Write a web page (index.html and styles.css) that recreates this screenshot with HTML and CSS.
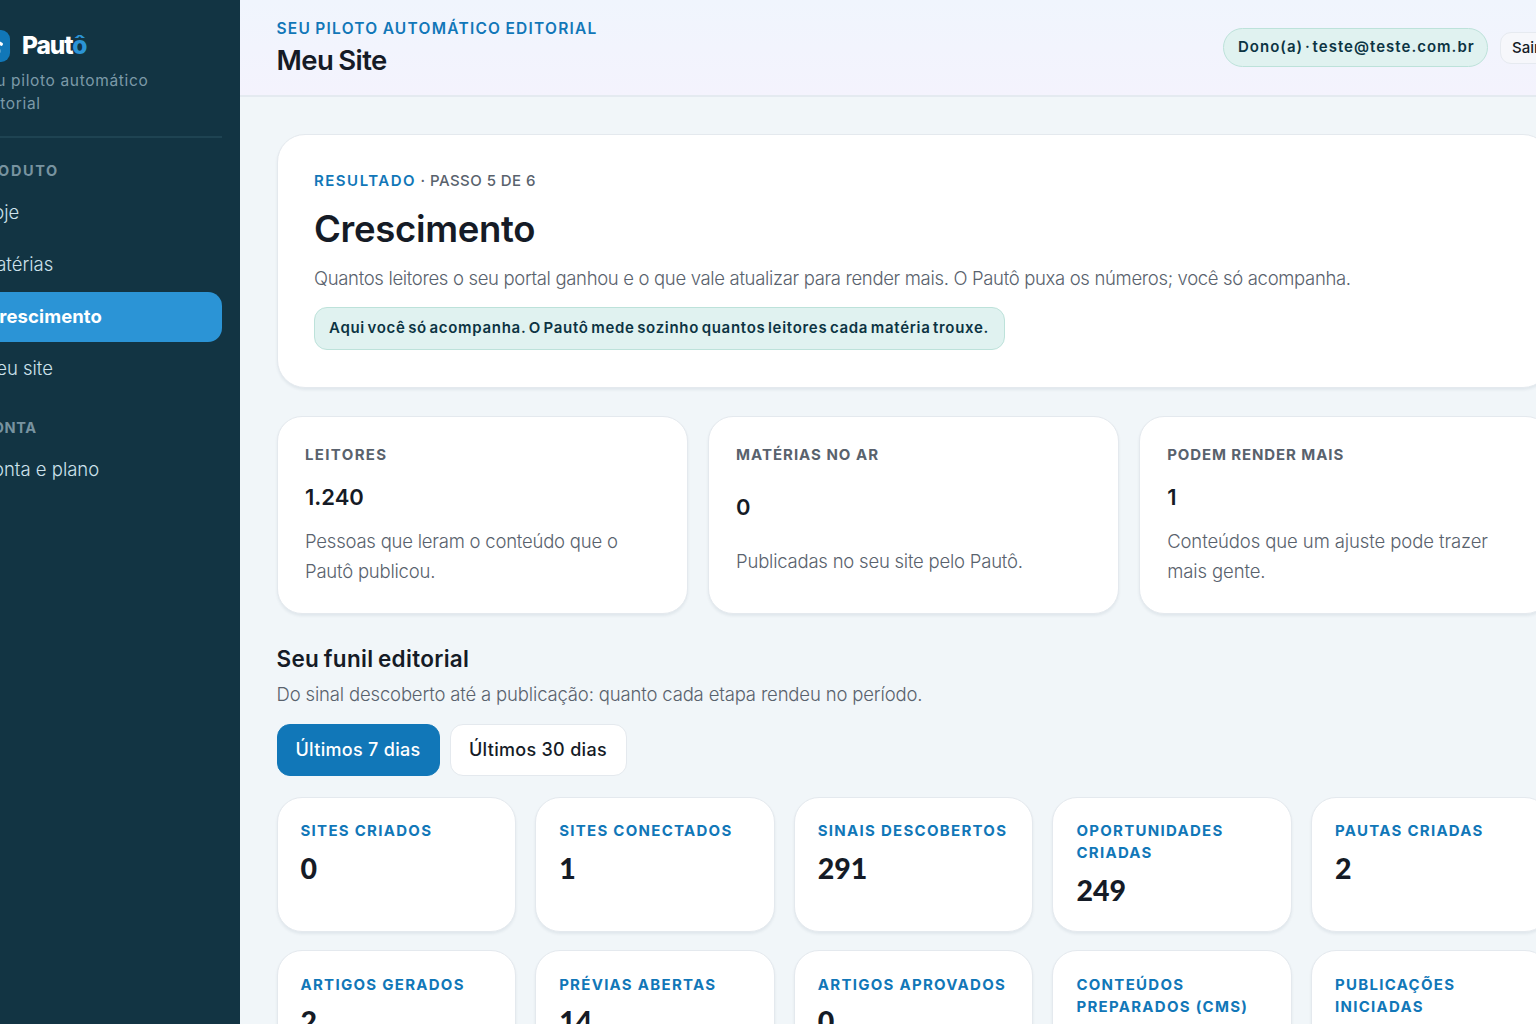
FILE: index.html
```html
<!DOCTYPE html>
<html lang="pt-BR">
<head>
<meta charset="utf-8">
<title>Pautô · Crescimento</title>
<link rel="stylesheet" href="styles.css">
</head>
<body>
<div class="app">
  <aside class="sidebar">
    <div class="brand">
      <div class="brand-row">
        <svg class="brand-mark" viewBox="0 0 34 34" aria-hidden="true"><rect y="1" width="34" height="32" rx="9" fill="#1177b8"/><path d="M9 16 L17 10 L25.3 15.2" fill="none" stroke="#fff" stroke-width="3.2" stroke-linecap="round" stroke-linejoin="round"/><circle cx="16.5" cy="22" r="6.3" fill="none" stroke="#fff" stroke-width="3"/></svg>
        <span class="brand-name">Paut<span class="brand-accent">ô</span></span>
      </div>
      <p class="brand-tag">Seu piloto automático<br>editorial</p>
    </div>
    <h2 class="nav-title">Produto</h2>
    <nav class="nav">
      <a class="nav-item">Hoje</a>
      <a class="nav-item">Matérias</a>
      <a class="nav-item active">Crescimento</a>
      <a class="nav-item">Meu site</a>
    </nav>
    <h2 class="nav-title nav-title-account">Conta</h2>
    <nav class="nav"><a class="nav-item">Conta e plano</a></nav>
  </aside>
  <div class="main">
    <header class="topbar">
      <div>
        <p class="topbar-eyebrow">Seu piloto automático editorial</p>
        <h1 class="topbar-title">Meu Site</h1>
      </div>
      <div class="account">
        <span class="account-pill">Dono(a) · teste@teste.com.br</span>
        <button class="logout">Sair</button>
      </div>
    </header>
    <main class="content">
      <section class="hero">
        <p class="hero-step"><strong>Resultado</strong> · Passo 5 de 6</p>
        <h2 class="hero-title">Crescimento</h2>
        <p class="hero-text">Quantos leitores o seu portal ganhou e o que vale atualizar para render mais. O Pautô puxa os números; você só acompanha.</p>
        <p class="notice">Aqui você só acompanha. O Pautô mede sozinho quantos leitores cada matéria trouxe.</p>
      </section>
      <section class="metrics">
        <article class="metric readers"><h3>Leitores</h3><strong>1.240</strong><p>Pessoas que leram o conteúdo que o<br>Pautô publicou.</p></article>
        <article class="metric"><h3>Matérias no ar</h3><strong>0</strong><p>Publicadas no seu site pelo Pautô.</p></article>
        <article class="metric potential"><h3>Podem render mais</h3><strong>1</strong><p>Conteúdos que um ajuste pode trazer<br>mais gente.</p></article>
      </section>
      <section class="funnel">
        <h2 class="funnel-title">Seu funil editorial</h2>
        <p class="funnel-text">Do sinal descoberto até a publicação: quanto cada etapa rendeu no período.</p>
        <div class="tabs"><button class="tab selected">Últimos 7 dias</button><button class="tab">Últimos 30 dias</button></div>
        <div class="steps">
          <article class="step"><h3>Sites criados</h3><strong>0</strong></article>
          <article class="step"><h3>Sites conectados</h3><strong>1</strong></article>
          <article class="step"><h3>Sinais descobertos</h3><strong>291</strong></article>
          <article class="step"><h3>Oportunidades<br>criadas</h3><strong>249</strong></article>
          <article class="step"><h3>Pautas criadas</h3><strong>2</strong></article>
          <article class="step"><h3>Artigos gerados</h3><strong>2</strong></article>
          <article class="step"><h3>Prévias abertas</h3><strong>14</strong></article>
          <article class="step"><h3>Artigos aprovados</h3><strong>0</strong></article>
          <article class="step"><h3>Conteúdos<br>preparados (CMS)</h3></article>
          <article class="step"><h3>Publicações<br>iniciadas</h3></article>
        </div>
      </section>
    </main>
  </div>
</div>
</body>
</html>
```
FILE: styles.css
```css
* { box-sizing: border-box; }
html, body { height: 100%; overflow: hidden; }
body { margin: 0; background: #f1f6f9; color: #151b26; font-family: Inter, sans-serif; }
h1, h2, h3, p { margin: 0; }
button { font-family: inherit; }

.app { display: flex; width: 1635px; height: 100%; margin-left: -48px; overflow: hidden; }

.sidebar { width: 288px; flex: none; padding: 28px 18px; background: #123443; }
.brand { height: 110px; padding-left: 6px; border-bottom: 2px solid #1e4352; }
.brand-row { display: flex; align-items: center; gap: 12px; height: 35px; }
.brand-mark { width: 34px; height: 34px; }
.brand-name { margin-top: -1px; font-size: 24.5px; font-weight: 800; letter-spacing: -1.1px; color: #fff; }
.brand-accent { color: #2b94d6; }
.brand-tag { margin-top: 6px; font-size: 15.5px; line-height: 23px; letter-spacing: .65px; color: #7c9aa8; }
.nav-title { margin: 23px 0 7px; padding-left: 6px; font-size: 14.5px; line-height: 20px; font-weight: 700; letter-spacing: 1.6px; text-transform: uppercase; color: #7893a0; }
.nav-title-account { margin-top: 24px; padding-left: 11.5px; letter-spacing: .6px; }
.nav { display: flex; flex-direction: column; gap: 2px; }
.nav-item { display: block; height: 50px; padding-left: 9.5px; border-radius: 14px; font-size: 18.5px; line-height: 49px; color: #cde2ec; font-weight: 300; }
.nav-item.active { padding-left: 15.5px; background: #2b94d6; color: #fff; font-weight: 700; letter-spacing: .1px; }

.main { flex: 1; min-width: 0; }
.topbar { display: flex; justify-content: space-between; align-items: flex-start; height: 97px; padding: 19px 37px 0 36.5px; border-bottom: 2px solid #e4eaf0; background: linear-gradient(#f0f5fd, #f4f3fd); }
.topbar-eyebrow { font-size: 15.5px; line-height: 20px; font-weight: 600; letter-spacing: 1.25px; word-spacing: -1px; text-transform: uppercase; color: #1177b8; }
.topbar-title { margin-top: 3px; font-size: 27.5px; line-height: 36px; font-weight: 600; letter-spacing: -.55px; word-spacing: -1.5px; }
.account { display: flex; align-items: center; gap: 12px; padding-top: 9px; }
.account-pill { width: 265px; height: 39px; padding-left: 14px; border: 1px solid #bde2da; border-radius: 20px; background: #e0f2f0; font-size: 15px; line-height: 36px; font-weight: 600; letter-spacing: 1.02px; word-spacing: -3px; color: #0c3443; white-space: nowrap; }
.logout { width: 50px; height: 32px; padding: 0 0 0 11px; border: 1px solid #e6eaf0; border-radius: 11px; background: #f6f7fb; font-size: 15px; font-weight: 500; color: #151b26; text-align: left; }

.content { padding: 36.5px 36.5px 0 36.5px; }
.hero, .metric, .step { border: 1px solid #e4e9ee; background: #fff; box-shadow: 0 2px 3px rgba(20, 40, 70, .07); }
.hero { height: 254px; padding: 36px 36px 36px 36.5px; border-radius: 28px; }
.hero-step { font-size: 15px; line-height: 20px; font-weight: 500; letter-spacing: .45px; text-transform: uppercase; color: #59626d; }
.hero-step strong { font-weight: 600; letter-spacing: 1.5px; color: #1177b8; }
.hero-title { margin-top: 16.5px; font-size: 36.5px; line-height: 44px; font-weight: 600; letter-spacing: -.3px; }
.hero-text { margin-top: 13px; letter-spacing: -.333px; }
.hero-text, .metric p, .funnel-text { font-size: 18.5px; line-height: 29.6px; font-weight: 300; color: #59626d; white-space: nowrap; }
.notice { width: 691px; height: 43px; margin-top: 13.6px; padding-left: 14px; border: 1px solid #bde2da; border-radius: 13px; background: #e0f2f0; font-size: 15px; line-height: 40px; font-weight: 600; letter-spacing: .7px; word-spacing: -1.9px; color: #0c3443; white-space: nowrap; }

.metrics { display: grid; grid-template-columns: repeat(3, 1fr); gap: 19.2px; margin-top: 28.5px; }
.metric { display: grid; gap: 14px; height: 198px; padding: 28px 27px 27px 27.5px; border-radius: 25px; }
.metric h3 { font-size: 15px; line-height: 20px; font-weight: 700; letter-spacing: 1px; text-transform: uppercase; color: #59626d; }
.metric strong { font-size: 22px; line-height: 36px; font-weight: 600; }
.metric p { margin-top: -2px; letter-spacing: -.22px; }
.readers h3 { letter-spacing: 1.35px; }
.potential h3 { letter-spacing: .9px; }
.potential p { letter-spacing: -.1px; }

.funnel { margin-top: 29.5px; }
.funnel-title { font-size: 22.5px; line-height: 30px; font-weight: 600; letter-spacing: .3px; word-spacing: -1.3px; }
.funnel-text { margin-top: 6px; letter-spacing: -.16px; }
.tabs { display: flex; gap: 10px; margin-top: 14.5px; }
.tab { height: 52px; width: 177px; padding: 0 18px; border: 1px solid #e4e9ee; border-radius: 13px; background: #fff; color: #151b26; font-size: 18px; font-weight: 500; letter-spacing: .3px; text-align: left; white-space: nowrap; }
.tab.selected { width: 163.5px; border-color: #1177b8; background: #1177b8; color: #fff; }
.steps { display: grid; grid-template-columns: repeat(5, 1fr); gap: 18.7px 19.2px; margin-top: 21px; }
.step { height: 135px; padding: 22.5px 22.5px 22px 23px; border-radius: 25px; }
.step h3 { font-size: 15px; line-height: 22px; font-weight: 700; letter-spacing: 1.28px; text-transform: uppercase; color: #1177b8; white-space: nowrap; }
.step strong { display: block; margin-top: 8.6px; font-family: Lato, sans-serif; font-size: 28.5px; line-height: 34px; font-weight: 900; }
```
